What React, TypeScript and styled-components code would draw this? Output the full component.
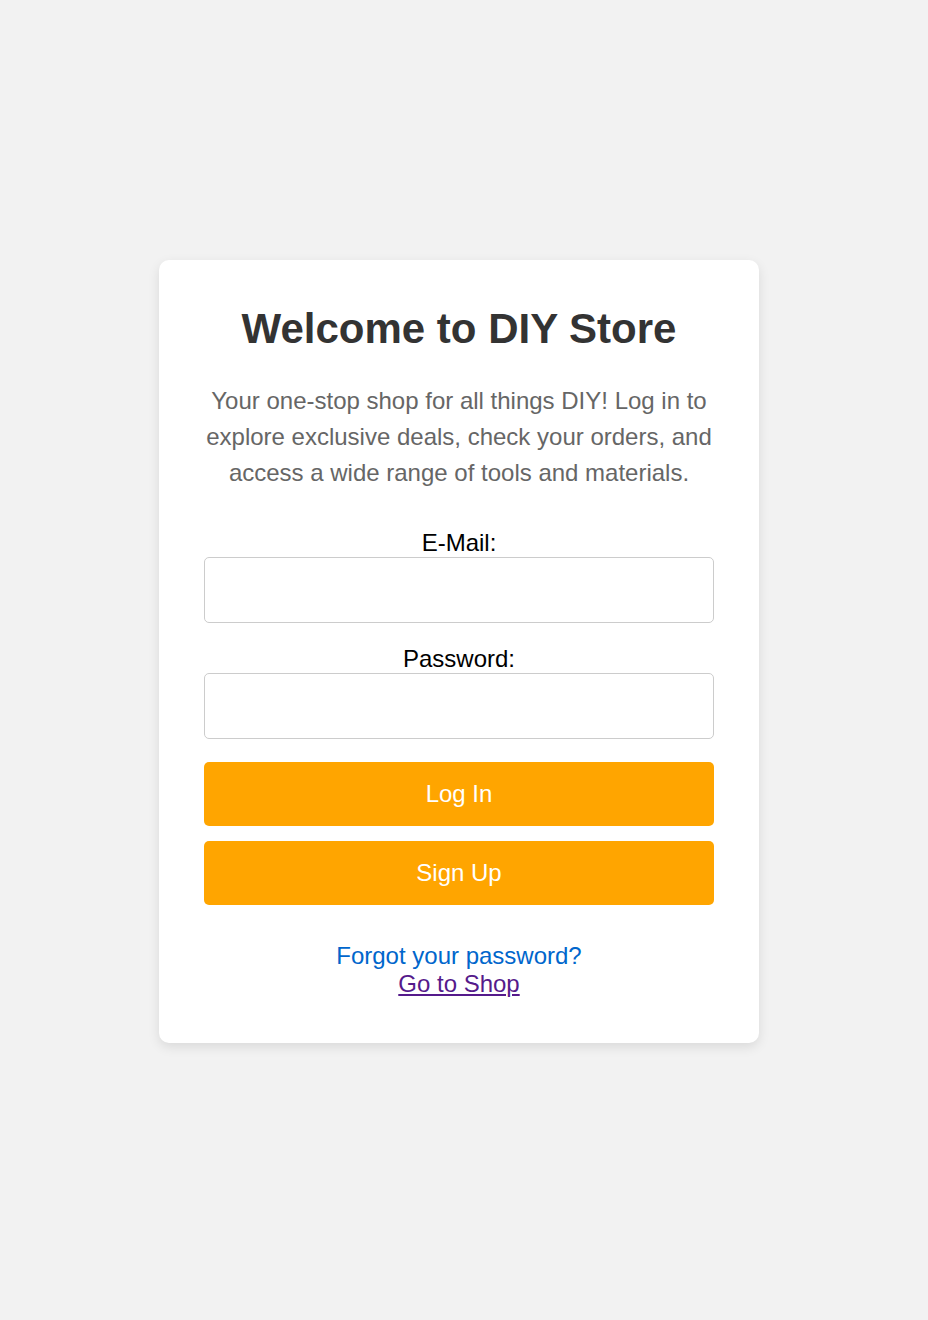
import React, { useState } from 'react';
import styled, { createGlobalStyle } from 'styled-components';

const GlobalStyle = createGlobalStyle`
  body {
    margin: 0;
    background-color: #f2f2f2;
    font-family: "Liberation Sans", Arial, sans-serif;
  }
`;

const Page = styled.div`
  min-height: 100vh;
  box-sizing: border-box;
  padding: 260px 10px 60px 0;
  display: flex;
  justify-content: center;
  align-items: flex-start;
`;

const Card = styled.div`
  width: 600px;
  box-sizing: border-box;
  padding: 45px;
  background-color: #ffffff;
  border-radius: 10px;
  box-shadow: 0 4px 12px rgba(0, 0, 0, 0.1);
  text-align: center;
`;

const Title = styled.h1`
  margin: 0 0 29px;
  font-size: 42px;
  font-weight: 700;
  line-height: normal;
  color: #333333;
`;

const Intro = styled.p`
  margin: 0 0 38px;
  padding-top: 1px;
  font-size: 24px;
  line-height: 36px;
  color: #666666;
`;

const Form = styled.form`
  display: flex;
  flex-direction: column;
`;

const Label = styled.label`
  display: block;
  font-size: 24px;
  line-height: normal;
  color: #000000;
`;

const Input = styled.input<{ $last?: boolean }>`
  display: block;
  width: 100%;
  height: 66px;
  box-sizing: border-box;
  margin: 0 0 ${props => (props.$last ? '23px' : '22px')};
  padding: 0 12px;
  border: 1px solid #cccccc;
  border-radius: 5px;
  font-size: 24px;
  font-family: inherit;
  outline: none;
`;

const ActionButton = styled.button<{ $gap?: string }>`
  display: block;
  width: 100%;
  height: 64px;
  margin: 0 0 ${props => props.$gap || '0'};
  border: none;
  border-radius: 5px;
  background-color: #ffa500;
  color: #ffffff;
  font-size: 24px;
  font-family: inherit;
  cursor: pointer;
`;

const Links = styled.div`
  margin-top: 37px;
  font-size: 24px;
  line-height: normal;
`;

const ForgotLink = styled.a`
  display: block;
  color: #0066cc;
  text-decoration: none;
`;

const ShopLink = styled.a`
  color: #551a8b;
  text-decoration: underline;
`;

const App: React.FC = () => {
  const [email, setEmail] = useState('');
  const [password, setPassword] = useState('');

  return (
    <>
      <GlobalStyle />
      <Page>
        <Card>
          <Title>Welcome to DIY Store</Title>
          <Intro>
            Your one-stop shop for all things DIY! Log in to explore exclusive deals, check your
            orders, and access a wide range of tools and materials.
          </Intro>
          <Form onSubmit={e => e.preventDefault()}>
            <Label htmlFor="email">E-Mail:</Label>
            <Input id="email" type="email" value={email} onChange={e => setEmail(e.target.value)} />
            <Label htmlFor="password">Password:</Label>
            <Input
              id="password"
              type="password"
              $last
              value={password}
              onChange={e => setPassword(e.target.value)}
            />
            <ActionButton type="submit" $gap="15px">Log In</ActionButton>
            <ActionButton type="button">Sign Up</ActionButton>
          </Form>
          <Links>
            <ForgotLink href="#">Forgot your password?</ForgotLink>
            <ShopLink href="#">Go to Shop</ShopLink>
          </Links>
        </Card>
      </Page>
    </>
  );
};

export default App;
